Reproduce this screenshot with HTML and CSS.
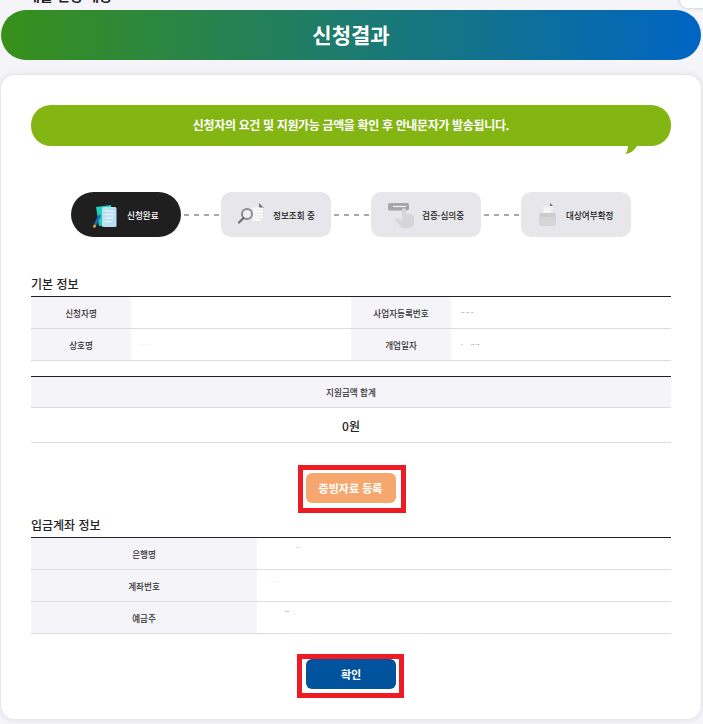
FILE: index.html

```html
<!DOCTYPE html>
<html lang="ko">
<head>
    <meta charset="UTF-8">
    <meta name="viewport" content="width=device-width, initial-scale=1.0">
    <title>신청결과</title>
    <link rel="stylesheet" href="styles.css">
</head>
<body>
    <div class="top-clip"><span>대출 신청 내용</span></div>
    <div class="corner-card"></div>

    <h1 class="page-title">신청결과</h1>

    <div class="card">
        <div class="notice">
            신청자의 요건 및 지원가능 금액을 확인 후 안내문자가 발송됩니다.
            <svg class="notice-tail" width="12" height="9" viewBox="0 0 12 9"><path d="M3 0 L12 0 Q8 7 0 8 Q3 5 3 0 Z" fill="#84b613"/></svg>
        </div>

        <div class="steps">
            <div class="step active">
                <svg class="step-icon icon-a" width="40" height="40" viewBox="0 0 40 40">
                    <path d="M11 12 L26 10 L29 30 L14 31 Z" fill="#1fd0b4"/>
                    <rect x="17" y="12" width="14.5" height="20" rx="1.5" fill="#b9dff5"/>
                    <path d="M20 16 H29 M20 19.5 H29 M20 23 H28 M20 26.5 H26" stroke="#f4fbff" stroke-width="1.2"/>
                    <path d="M15 20 L10 30" stroke="#2467c8" stroke-width="2.6"/>
                    <path d="M10 30 L9 32.5" stroke="#f0b23c" stroke-width="2.4"/>
                </svg>
                <span>신청완료</span>
            </div>
            <div class="dash"></div>
            <div class="step">
                <svg class="step-icon icon-b" width="40" height="40" viewBox="0 0 40 40">
                    <path d="M27 8 L32 13 H27 Z" fill="#77777b"/>
                    <path d="M21 13.5 H31 M21 16.5 H31 M21 19.5 H31 M21 22.5 H31 M21 25 H29" stroke="#fbfbfc" stroke-width="2"/>
                    <circle cx="15" cy="19" r="5" fill="#f0f0f2" stroke="#8b8b8f" stroke-width="2"/>
                    <path d="M11.5 23 L7 27.5" stroke="#6e6e72" stroke-width="2.2" stroke-linecap="round"/>
                </svg>
                <span>정보조회 중</span>
            </div>
            <div class="dash"></div>
            <div class="step">
                <svg class="step-icon icon-c" width="40" height="40" viewBox="0 0 40 40">
                    <rect x="6" y="8" width="21" height="7.5" rx="2" fill="#a6a6aa"/>
                    <path d="M11 11.5 H24" stroke="#f4f4f6" stroke-width="1.2"/>
                    <path d="M20 14 Q22 12.5 24 14 V19 L31 20 Q32.5 21 32 24 V29 Q31 33 26 33 H22 Q19 33 17 30 L13 24 Q14 22 16 23.5 L20 26 Z" fill="#d6d6d9"/>
                </svg>
                <span>검증·심의중</span>
            </div>
            <div class="dash"></div>
            <div class="step">
                <svg class="step-icon icon-d" width="40" height="40" viewBox="0 0 40 40">
                    <path d="M20 8 L23 11 H20 Z" fill="#6f6f73"/>
                    <rect x="13" y="11" width="10" height="9" fill="#eeeef0"/>
                    <path d="M14 13 H21 M14 15 H21 M14 17 H20" stroke="#fbfbfc" stroke-width="1"/>
                    <path d="M9 20 Q9 18 11 18 H26 V29 Q26 31 24 31 H11 Q9 31 9 29 Z" fill="#d6d6d9"/>
                    <rect x="10" y="18" width="15" height="4" fill="#cdcdd0"/>
                </svg>
                <span>대상여부확정</span>
            </div>
        </div>

        <h2 class="section-title first">기본 정보</h2>
        <table class="info-table">
            <tr>
                <th class="col-short">신청자명</th>
                <td class="col-wide"></td>
                <th class="col-short">사업자등록번호</th>
                <td class="col-wide"><span class="speck">·· ·· -</span></td>
            </tr>
            <tr>
                <th>상호명</th>
                <td><span class="speck faint">· &nbsp;· ·</span></td>
                <th>개업일자</th>
                <td><span class="speck">· &nbsp; &nbsp; ·· ··</span></td>
            </tr>
        </table>

        <table class="info-table total-table">
            <tr><th class="total-head">지원금액 합계</th></tr>
            <tr><td class="total-value">0원</td></tr>
        </table>

        <div class="btn-row">
            <div class="frame frame-top"><button class="btn btn-orange">증빙자료 등록</button></div>
        </div>

        <h2 class="section-title">입금계좌 정보</h2>
        <table class="info-table">
            <tr>
                <th class="col-bank">은행명</th>
                <td><span class="speck bank-1">·</span></td>
            </tr>
            <tr>
                <th>계좌번호</th>
                <td><span class="speck faint bank-2">· · ·</span></td>
            </tr>
            <tr>
                <th>예금주</th>
                <td><span class="speck bank-3">--</span></td>
            </tr>
        </table>

        <div class="btn-row btn-row-last">
            <div class="frame frame-bottom"><button class="btn btn-blue">확인</button></div>
        </div>
    </div>
</body>
</html>
```

FILE: styles.css

```css
* {
    box-sizing: border-box;
}
html, body {
    margin: 0;
    padding: 0;
}
body {
    position: relative;
    width: 703px;
    height: 724px;
    overflow: hidden;
    background: #f4f4f9;
    font-family: "Noto Sans CJK KR", "Noto Sans", sans-serif;
    color: #222;
}
.top-clip {
    height: 10px;
    padding-left: 27px;
    overflow: hidden;
    font-size: 14px;
    font-weight: 700;
    line-height: 3px;
}
.top-clip span {
    display: block;
    margin-top: -6px;
}
.corner-card {
    position: absolute;
    top: -10px;
    right: -10px;
    width: 33px;
    height: 18px;
    background: #fff;
    border-radius: 8px;
    box-shadow: 0 0 4px rgba(0,0,0,0.2);
}
.page-title {
    width: 700px;
    height: 50px;
    margin: 0 0 15px 1px;
    background: linear-gradient(90deg, #38901a 0%, #0065c4 100%);
    border-radius: 25px;
    color: #fff;
    font-size: 21px;
    font-weight: 700;
    line-height: 49px;
    text-align: center;
}
.card {
    width: 700px;
    height: 644px;
    margin-left: 1px;
    padding: 30px 30px 0;
    background: #fff;
    border-radius: 14px;
    box-shadow: 0 0 6px rgba(0,0,0,0.12);
}
.notice {
    position: relative;
    height: 41px;
    background: #84b613;
    border-radius: 20px;
    color: #fff;
    font-size: 12px;
    font-weight: 700;
    letter-spacing: -0.35px;
    line-height: 40px;
    text-align: center;
}
.notice-tail {
    position: absolute;
    left: 594px;
    top: 41px;
    display: block;
}
.steps {
    display: flex;
    justify-content: center;
    align-items: center;
    margin-top: 46px;
}
.step {
    display: flex;
    align-items: center;
    width: 110px;
    height: 45px;
    background: #e6e6eb;
    border-radius: 10px;
    color: #222;
    font-size: 8.6px;
    font-weight: 500;
}
.step.active {
    background: #1f1f1f;
    border-radius: 23px;
    color: #fff;
}
.step-icon {
    flex: none;
}
.icon-a {
    margin: 0 2px 0 14px;
}
.icon-b {
    margin: 0 1px 0 11px;
}
.icon-c {
    margin: 0 0 0 11px;
}
.icon-d {
    margin: 0 -4px 0 9px;
}
.dash {
    width: 40px;
    height: 2px;
    background: repeating-linear-gradient(90deg, #a9a9ad 0, #a9a9ad 5px, transparent 5px, transparent 10px);
    background-position: 3px 0;
}
.section-title {
    height: 24px;
    margin: 0;
    font-size: 12px;
    font-weight: 500;
    line-height: 23px;
}
.section-title.first {
    margin-top: 35px;
}
.info-table {
    width: 100%;
    border-collapse: separate;
    border-spacing: 0;
    table-layout: fixed;
    border-top: 1px solid #222;
}
.info-table th,
.info-table td {
    height: 32px;
    padding: 0;
    border-bottom: 1px solid #dcdcdf;
    font-size: 8.6px;
    text-align: center;
}
.info-table th {
    background: #f4f4f9;
    color: #333;
    font-weight: 500;
}
.info-table td {
    background: #fff;
    text-align: left;
}
.col-short {
    width: 100px;
}
.col-wide {
    width: 220px;
}
.col-bank {
    width: 226px;
}
.speck {
    display: block;
    padding-left: 10px;
    font-size: 6px;
    line-height: 8px;
    color: #333;
}
.speck.faint {
    color: #c4c4c4;
}
.speck.bank-1 {
    padding-left: 40px;
    margin-top: -10px;
}
.speck.bank-2 {
    padding-left: 12px;
    margin-top: -8px;
}
.speck.bank-3 {
    padding-left: 28px;
    margin-top: -10px;
}
.total-table {
    margin-top: 15px;
}
.info-table .total-head {
    height: 31px;
}
.info-table .total-value {
    height: 35px;
    color: #222;
    font-size: 12px;
    font-weight: 500;
    text-align: center;
}
.btn-row {
    display: flex;
    justify-content: center;
    margin-top: 22px;
}
.btn-row-last {
    margin-top: 20px;
}
.frame {
    border: 5px solid #ed1c24;
    background: #fff;
}
.frame-top {
    width: 108px;
    height: 48px;
    margin-left: 1px;
    padding: 3px 0 0 3px;
}
.frame-bottom {
    width: 107px;
    height: 44px;
    margin-left: -1px;
    padding: 0 0 0 4px;
}
.btn {
    display: block;
    width: 90px;
    height: 30px;
    padding: 0;
    border: none;
    border-radius: 6px;
    color: #fff;
    font-family: inherit;
    font-size: 11px;
    font-weight: 700;
}
.btn-orange {
    background: #f5a76f;
}
.btn-blue {
    background: #00539c;
}
```
